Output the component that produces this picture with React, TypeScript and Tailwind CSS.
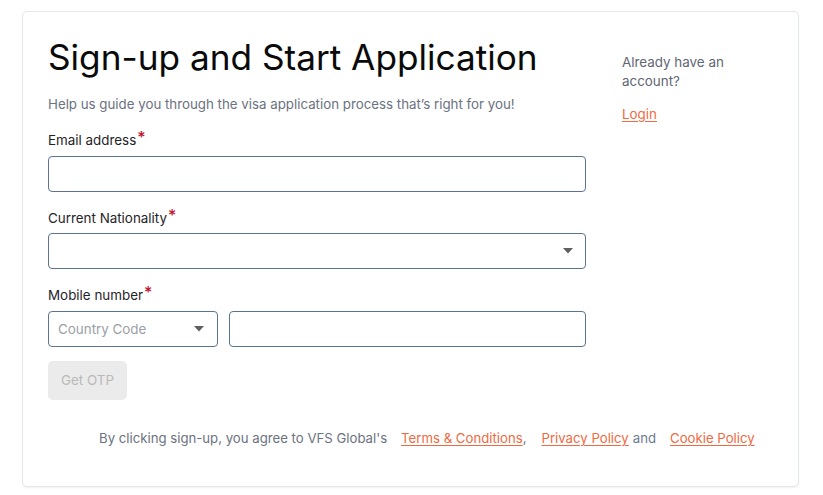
import { useState } from "react";

function Caret() {
  return (
    <svg width="10" height="6" viewBox="0 0 10 6" className="shrink-0">
      <path d="M0 0h10L5 5.5z" fill="#5f5f5f" />
    </svg>
  );
}

function Label({ text }: { text: string }) {
  return (
    <div className="text-[13.4px] leading-[20px] text-[#1f2328]">
      {text}
      <span className="relative -top-[2px] ml-[1px] text-[16px] font-medium text-[#c0102f]">*</span>
    </div>
  );
}

export default function App() {
  const [email, setEmail] = useState("");
  const [phone, setPhone] = useState("");

  return (
    <div
      className="min-h-[495px] w-[823px] bg-white pt-[11px] pl-[22px]"
      style={{ fontFamily: "Inter, 'Noto Sans', sans-serif" }}
    >
      <div className="flex h-[476px] w-[777px] flex-col rounded-[5px] border border-[#e3e7ee] bg-white pt-[23px] pl-[25px] shadow-[0_1px_2px_rgba(0,0,0,0.06)]">
        <div className="flex">
          <div className="w-[538px]">
            <h1 className="text-[35.2px] leading-[44px] font-normal text-[#0a0a0a]">
              Sign-up and Start Application
            </h1>
            <p className="mt-[15px] text-[13.3px] leading-[20px] text-[#6b7280]">
              Help us guide you through the visa application process that’s right for you!
            </p>

            <div className="mt-[15px]">
              <Label text="Email address" />
              <input
                value={email}
                onChange={(e) => setEmail(e.target.value)}
                className="mt-[6px] block h-[36px] w-full rounded-[4px] border border-[#5c7490] px-3 text-[14px] outline-none"
              />
            </div>

            <div className="mt-[15px]">
              <Label text="Current Nationality" />
              <div className="mt-[5px] flex h-[36px] w-full items-center justify-end rounded-[4px] border border-[#5c7490] pr-[12px]">
                <Caret />
              </div>
            </div>

            <div className="mt-[15px]">
              <Label text="Mobile number" />
              <div className="mt-[6px] flex gap-[11px]">
                <div className="flex h-[36px] w-[170px] items-center justify-between rounded-[4px] border border-[#5c7490] pr-[13px] pl-[9px]">
                  <span className="text-[13.4px] text-[#9aa0a6]">Country Code</span>
                  <Caret />
                </div>
                <input
                  value={phone}
                  onChange={(e) => setPhone(e.target.value)}
                  className="block h-[36px] flex-1 rounded-[4px] border border-[#5c7490] px-3 text-[14px] outline-none"
                />
              </div>
            </div>

            <button
              disabled
              className="mt-[14px] h-[39px] w-[79px] rounded-[5px] bg-[#ebebeb] text-[13.4px] text-[#b9b9b9]"
            >
              Get OTP
            </button>
          </div>

          <div className="ml-[36px] pt-[18px]">
            <div className="w-[120px] text-[13.4px] leading-[19px] text-[#5f6673]">
              Already have an account?
            </div>
            <a className="mt-[13px] block text-[13.4px] text-[#ef6a43] underline underline-offset-2">Login</a>
          </div>
        </div>

        <div className="mt-[28px] pl-[51px] text-[13.2px] leading-[20px] whitespace-nowrap text-[#6b7280]">
          By clicking sign-up, you agree to VFS Global's
          <a className="ml-[14px] text-[#ef6a43] underline underline-offset-2">Terms &amp; Conditions</a>
          <span>,</span>
          <a className="ml-[15px] text-[#ef6a43] underline underline-offset-2">Privacy Policy</a>
          <span className="ml-[4px] text-[#6b7a90]">and</span>
          <a className="ml-[14px] text-[#ef6a43] underline underline-offset-2">Cookie Policy</a>
        </div>
      </div>
    </div>
  );
}
